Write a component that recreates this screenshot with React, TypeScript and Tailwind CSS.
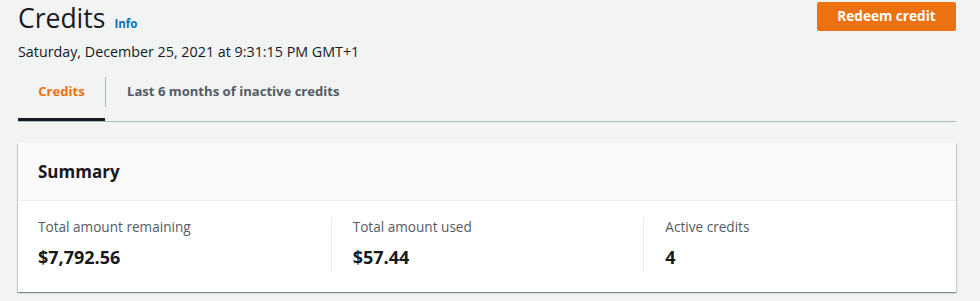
export default function App() {
  const stats = [
    { label: 'Total amount remaining', value: '$7,792.56' },
    { label: 'Total amount used', value: '$57.44' },
    { label: 'Active credits', value: '4' },
  ]

  return (
    <div className="h-[301px] w-[980px] bg-[#f2f3f3] pl-[18px] pr-[24px] text-[#16191f] [font-family:'Open_Sans',sans-serif]">
      <div className="flex items-start justify-between">
        <div>
          <div className="flex items-baseline gap-[9px]">
            <h1 className="text-[26.5px] leading-[36px]">Credits</h1>
            <a className="text-[11.5px] font-bold text-[#0073bb]">Info</a>
          </div>
          <div className="mt-[6px] text-[14.3px] leading-[20px]">
            Saturday, December 25, 2021 at 9:31:15 PM GMT+1
          </div>
        </div>
        <button className="mt-[2px] h-[29px] w-[139px] rounded-[2px] bg-[#ec7211] text-[13.6px] font-bold text-white">
          Redeem credit
        </button>
      </div>

      <div className="mt-[1px] flex h-[59px] items-center border-b border-[#aab7b8]">
        <div className="flex h-full w-[87px] items-center justify-center border-b-[3px] border-t-[3px] border-b-[#16191f] border-t-transparent text-[13.1px] font-bold text-[#ec7211]">
          Credits
        </div>
        <div className="h-[30px] w-px bg-[#aab7b8]" />
        <div className="px-[21px] text-[13.1px] font-bold text-[#545b64]">
          Last 6 months of inactive credits
        </div>
      </div>

      <div className="mt-[21px] bg-white shadow-[0_1px_1px_0_rgba(0,28,36,0.3),1px_1px_1px_0_rgba(0,28,36,0.15),-1px_1px_1px_0_rgba(0,28,36,0.15)]">
        <div className="flex h-[58px] items-center border-b border-[#eaeded] bg-[#fafafa] px-[20px]">
          <h2 className="text-[17px] font-bold leading-[22px]">Summary</h2>
        </div>
        <div className="grid grid-cols-3 pb-[20px] pt-[16px]">
          {stats.map((s, i) => (
            <div
              key={s.label}
              className={i === 0 ? 'px-[20px] pb-[4px]' : 'border-l border-[#eaeded] px-[21px] pb-[4px]'}
            >
              <div className="text-[13.6px] leading-[20px] text-[#545b64]">{s.label}</div>
              <div className="mt-[9px] text-[18px] font-bold leading-[22px]">{s.value}</div>
            </div>
          ))}
        </div>
      </div>
    </div>
  )
}
